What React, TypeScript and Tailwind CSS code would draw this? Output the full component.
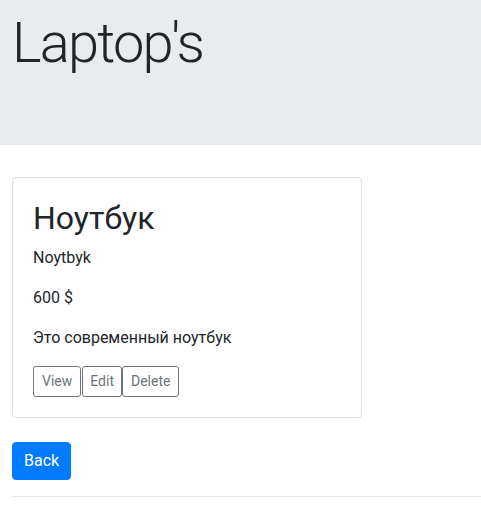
import React from "react";

export default function App() {
  return (
    <div
      className="min-h-[519px] bg-white text-[#212529] text-[16px] leading-[1.5] overflow-hidden"
      style={{ fontFamily: 'Roboto, "Noto Sans", sans-serif' }}
    >
      <div className="bg-[#e9ecef] pl-[12px] pr-4 pt-[10px] h-[145px] mb-8">
        <h1 className="text-[56px] font-light leading-[1.2] tracking-[-1.8px] m-0">Laptop's</h1>
      </div>
      <div className="pl-3">
        <div className="w-[350px] border border-[rgba(0,0,0,0.125)] rounded-[4px] pt-[21px] px-5 pb-5">
          <h2 className="text-[32px] font-normal leading-[1.2] mb-[9px]">Ноутбук</h2>
          <p className="mb-4">Noytbyk</p>
          <p className="mb-4">600 $</p>
          <p className="mb-4">Это современный ноутбук</p>
          <div className="flex">
            <button className="h-[31px] px-2 text-[14px] leading-[1.5] text-[#6c757d] border border-[#6c757d] rounded-[3px] bg-white">
              View
            </button>
            <button className="h-[31px] ml-px px-[7px] text-[14px] leading-[1.5] text-[#6c757d] border border-[#6c757d] rounded-[3px] bg-white">
              Edit
            </button>
            <button className="h-[31px] px-2 text-[14px] leading-[1.5] text-[#6c757d] border border-[#6c757d] rounded-[3px] bg-white">
              Delete
            </button>
          </div>
        </div>
        <div className="mt-[24px]">
          <button className="h-[38px] px-[11px] text-[16px] leading-[1.5] text-white bg-[#007bff] border border-[#007bff] rounded-[4px]">
            Back
          </button>
        </div>
        <div className="mt-4 border-t border-[#e5e5e5] leading-[62px] text-[14px] text-[#6c757d] whitespace-nowrap">
          © 2020 - Laptops - <span className="text-[#007bff]">Privacy</span>
        </div>
      </div>
    </div>
  );
}
